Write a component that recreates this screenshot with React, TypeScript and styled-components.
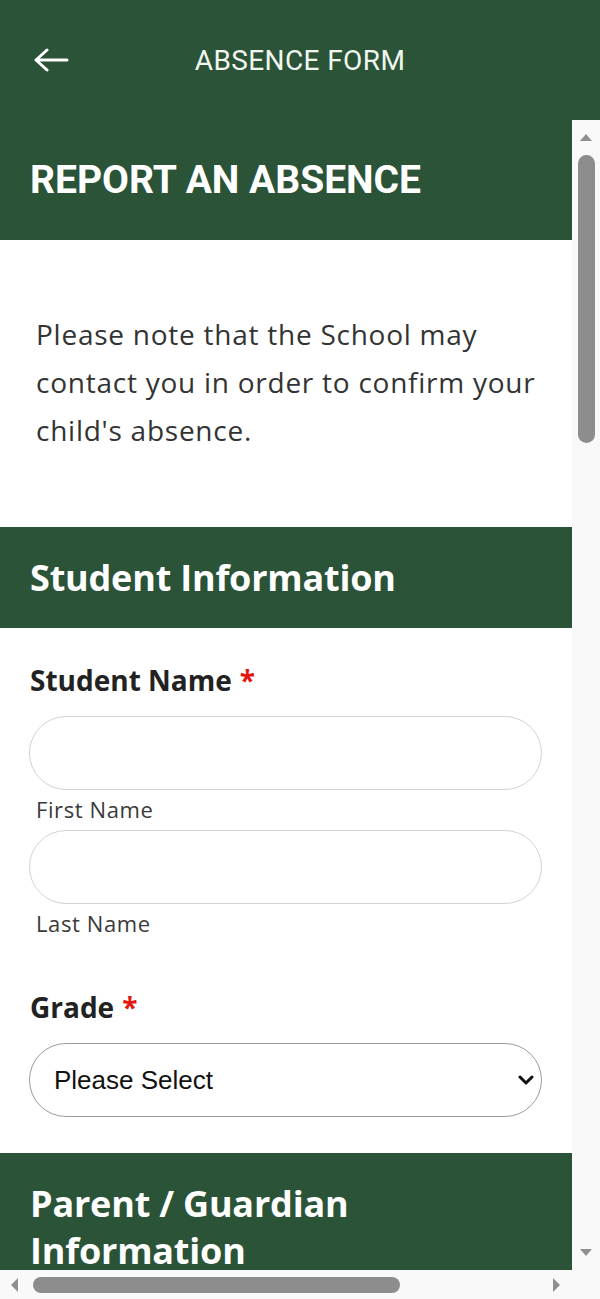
import styled, { createGlobalStyle } from "styled-components";

const GlobalStyle = createGlobalStyle`
  html, body, #root {
    margin: 0;
    padding: 0;
    height: 100%;
  }
  body {
    background: #ffffff;
    font-family: "Open Sans", "Liberation Sans", sans-serif;
  }
  * {
    box-sizing: border-box;
  }
`;

const GREEN = "#2b5337";

const Frame = styled.div`
  height: 100vh;
  display: flex;
  flex-direction: column;
  overflow: hidden;
`;

const TopBar = styled.header`
  height: 120px;
  flex-shrink: 0;
  background: ${GREEN};
  display: grid;
  grid-template-columns: 1fr auto 1fr;
  align-items: center;
`;

const BackButton = styled.button`
  justify-self: start;
  background: none;
  border: none;
  padding: 0 0 0 33px;
  display: flex;
  cursor: pointer;
`;

const BarTitle = styled.h1`
  margin: 0;
  color: #f1f6f1;
  font-family: Roboto, "Liberation Sans", sans-serif;
  font-weight: 400;
  font-size: 28px;
  letter-spacing: 0.4px;
`;

const Middle = styled.div`
  flex: 1;
  display: flex;
  min-height: 0;
`;

const Viewport = styled.main`
  flex: 1;
  overflow: hidden;
`;

const Banner = styled.div`
  height: 120px;
  background: ${GREEN};
  display: flex;
  align-items: center;
  padding-left: 30px;
  color: #ffffff;
  font-family: Roboto, "Liberation Sans", sans-serif;
  font-weight: 700;
  font-size: 39px;
`;

const Intro = styled.p`
  margin: 0;
  padding: 70px 20px 73px 36px;
  color: #333333;
  font-size: 28px;
  line-height: 48px;
  letter-spacing: 0.75px;
`;

const SectionHead = styled.h2`
  margin: 0;
  background: ${GREEN};
  color: #ffffff;
  padding: 27px 30px 27px 30px;
  font-weight: 700;
  font-size: 36px;
  line-height: 47px;
  letter-spacing: -0.2px;
`;

const Form = styled.form`
  padding: 34px 30px 36px 29px;
  display: flex;
  flex-direction: column;
  gap: 45px;
`;

const Field = styled.div`
  display: flex;
  flex-direction: column;
`;

const Label = styled.label`
  padding-left: 1px;
  margin-bottom: 18px;
  color: #222222;
  font-weight: 700;
  font-size: 28px;
  line-height: 36px;
`;

const Req = styled.span`
  color: #e3170f;
  margin-left: 8px;
`;

const TextInput = styled.input`
  width: 100%;
  height: 74px;
  border: 1.5px solid #d3d3d3;
  border-radius: 37px;
  padding: 0 26px;
  font-size: 24px;
  outline: none;
  background: #ffffff;
`;

const SubLabel = styled.span`
  margin: 6px 0 8px 7px;
  color: #3a3a3a;
  font-size: 22px;
  line-height: 26px;
  letter-spacing: 0.6px;
`;

const SelectWrap = styled.div`
  position: relative;
`;

const Select = styled.select`
  width: 100%;
  height: 74px;
  appearance: none;
  border: 1.5px solid #9b9b9b;
  border-radius: 37px;
  padding: 0 50px 0 24px;
  background: #ffffff;
  color: #111111;
  font-family: "Liberation Sans", Arial, sans-serif;
  font-size: 26px;
  outline: none;
`;

const Chevron = styled.svg`
  position: absolute;
  right: 8px;
  top: 50%;
  margin-top: -5px;
  pointer-events: none;
`;

/* fake scrollbars, drawn in flow */
const VScroll = styled.div`
  width: 28px;
  flex-shrink: 0;
  background: #f9f9f9;
  display: flex;
  flex-direction: column;
  align-items: center;
`;

const ArrowCell = styled.div<{ $h: number; $w?: number }>`
  height: ${(p) => p.$h}px;
  width: ${(p) => (p.$w ? `${p.$w}px` : "100%")};
  flex-shrink: 0;
  display: flex;
  align-items: center;
  justify-content: center;
`;

const VThumb = styled.div`
  width: 17px;
  height: 288px;
  border-radius: 9px;
  background: #8d8d8d;
  margin-top: 1px;
`;

const Fill = styled.div`
  flex: 1;
`;

const Bottom = styled.div`
  height: 29px;
  flex-shrink: 0;
  display: flex;
  background: #f9f9f9;
`;

const HScroll = styled.div`
  flex: 1;
  display: flex;
  align-items: center;
`;

const HThumb = styled.div`
  width: 367px;
  height: 16px;
  border-radius: 8px;
  background: #8d8d8d;
  margin-left: 5px;
`;

const Corner = styled.div`
  width: 28px;
`;

function Tri({ dir }: { dir: "up" | "down" | "left" | "right" }) {
  const pts = {
    up: "0,7 6,0 12,7",
    down: "0,0 12,0 6,7",
    left: "7,0 7,14 0,7",
    right: "0,0 0,14 7,7",
  }[dir];
  const vertical = dir === "up" || dir === "down";
  return (
    <svg width={vertical ? 12 : 7} height={vertical ? 7 : 14}>
      <polygon points={pts} fill="#8f8f8f" />
    </svg>
  );
}

function App() {
  return (
    <>
      <GlobalStyle />
      <Frame>
        <TopBar>
          <BackButton aria-label="Back">
            <svg width="36" height="24" viewBox="0 0 36 24" fill="none">
              <path
                d="M3 12H34M14 2 3 12l11 10"
                stroke="#ffffff"
                strokeWidth="3"
                strokeLinecap="round"
                strokeLinejoin="round"
              />
            </svg>
          </BackButton>
          <BarTitle>ABSENCE FORM</BarTitle>
          <div />
        </TopBar>
        <Middle>
          <Viewport>
            <Banner>REPORT AN ABSENCE</Banner>
            <Intro>
              Please note that the School may contact you in order to confirm
              your child's absence.
            </Intro>
            <SectionHead>Student Information</SectionHead>
            <Form onSubmit={(e) => e.preventDefault()}>
              <Field>
                <Label>
                  Student Name<Req>*</Req>
                </Label>
                <TextInput type="text" />
                <SubLabel>First Name</SubLabel>
                <TextInput type="text" />
                <SubLabel>Last Name</SubLabel>
              </Field>
              <Field>
                <Label>
                  Grade<Req>*</Req>
                </Label>
                <SelectWrap>
                  <Select defaultValue="">
                    <option value="">Please Select</option>
                    <option>Kindergarten</option>
                    <option>Grade 1</option>
                    <option>Grade 2</option>
                    <option>Grade 3</option>
                  </Select>
                  <Chevron width="16" height="10" viewBox="0 0 16 10" fill="none">
                    <path
                      d="M2 2l6 6 6-6"
                      stroke="#111111"
                      strokeWidth="3"
                      strokeLinecap="round"
                      strokeLinejoin="round"
                    />
                  </Chevron>
                </SelectWrap>
              </Field>
            </Form>
            <SectionHead>Parent / Guardian Information</SectionHead>
          </Viewport>
          <VScroll>
            <ArrowCell $h={34}>
              <Tri dir="up" />
            </ArrowCell>
            <VThumb />
            <Fill />
            <ArrowCell $h={36}>
              <Tri dir="down" />
            </ArrowCell>
          </VScroll>
        </Middle>
        <Bottom>
          <HScroll>
            <ArrowCell $h={29} $w={28}>
              <Tri dir="left" />
            </ArrowCell>
            <HThumb />
            <Fill />
            <ArrowCell $h={29} $w={32}>
              <Tri dir="right" />
            </ArrowCell>
          </HScroll>
          <Corner />
        </Bottom>
      </Frame>
    </>
  );
}

export default App;
